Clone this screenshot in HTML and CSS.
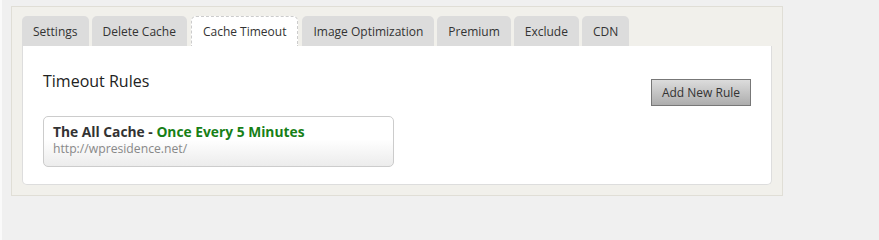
FILE: index.html
```html
<!DOCTYPE html>
<html>
<head>
    <title>Cache Timeout</title>
    <link rel="stylesheet" href="styles.css">
</head>
<body>

<div class="frame">
    <ul class="tabs">
        <li>Settings</li>
        <li>Delete Cache</li>
        <li class="active">Cache Timeout</li>
        <li>Image Optimization</li>
        <li>Premium</li>
        <li>Exclude</li>
        <li>CDN</li>
    </ul>

    <div class="panel">
        <div class="panel-head">
            <h2>Timeout Rules</h2>
            <button class="add-rule">Add New Rule</button>
        </div>

        <div class="rule">
            <div class="rule-title">The All Cache - <span class="rule-time">Once Every 5 Minutes</span></div>
            <div class="rule-url">http://wpresidence.net/</div>
        </div>
    </div>
</div>

</body>
</html>
```

FILE: styles.css
```css
BODY {
    margin: 0;
    padding: 6px 0 0 11px;
    background: #f0f0f0;
    border-left: 2px solid #fafafa;
    font-family: "Open Sans", "Liberation Sans", sans-serif;
    color: #333;
    height: 240px;
    box-sizing: border-box;
}

.frame {
    width: 750px;
    padding: 9px 10px 10px 10px;
    background: #f1f0eb;
    border: 1px solid #e0ded6;
    margin-left: -2px;
}

.tabs {
    list-style: none;
    margin: 0;
    padding: 0;
    display: flex;
    gap: 3px;
}

.tabs LI {
    font-size: 12px;
    height: 30px;
    line-height: 30px;
    padding: 1px 11px 0 11px;
    background: #dcdcdc;
    border-radius: 5px 5px 0 0;
    color: #333;
    box-sizing: border-box;
}

.tabs LI.active {
    background: #fff;
    border: 1px dashed #ccc;
    border-bottom: none;
    line-height: 29px;
    padding-top: 0;
    margin: 0 1px;
}

.panel {
    background: #fff;
    border: 1px solid #ddd;
    border-top: none;
    border-radius: 0 0 5px 5px;
    padding: 0 20px 17px 20px;
}

.panel-head {
    display: flex;
    justify-content: space-between;
    align-items: flex-start;
}

.panel-head H2 {
    font-size: 16px;
    font-weight: normal;
    color: #222;
    margin: 24px 0 0 0;
    line-height: 22px;
}

.add-rule {
    margin-top: 33px;
    width: 100px;
    height: 27px;
    font-family: "Open Sans", "Liberation Sans", sans-serif;
    font-size: 12px;
    color: #333;
    border: 1px solid #777;
    background: linear-gradient(#dcdcdc, #adadad);
    padding: 0;
}

.rule {
    margin-top: 10px;
    width: 331px;
    border: 1px solid #ccc;
    border-radius: 5px;
    background: linear-gradient(#fff 45%, #ececec);
    padding: 6px 9px 9px 9px;
}

.rule-title {
    font-size: 13.8px;
    font-weight: bold;
    color: #333;
    line-height: 18px;
}

.rule-time {
    color: #178017;
}

.rule-url {
    font-size: 12.2px;
    color: #888;
    line-height: 16px;
}
```
